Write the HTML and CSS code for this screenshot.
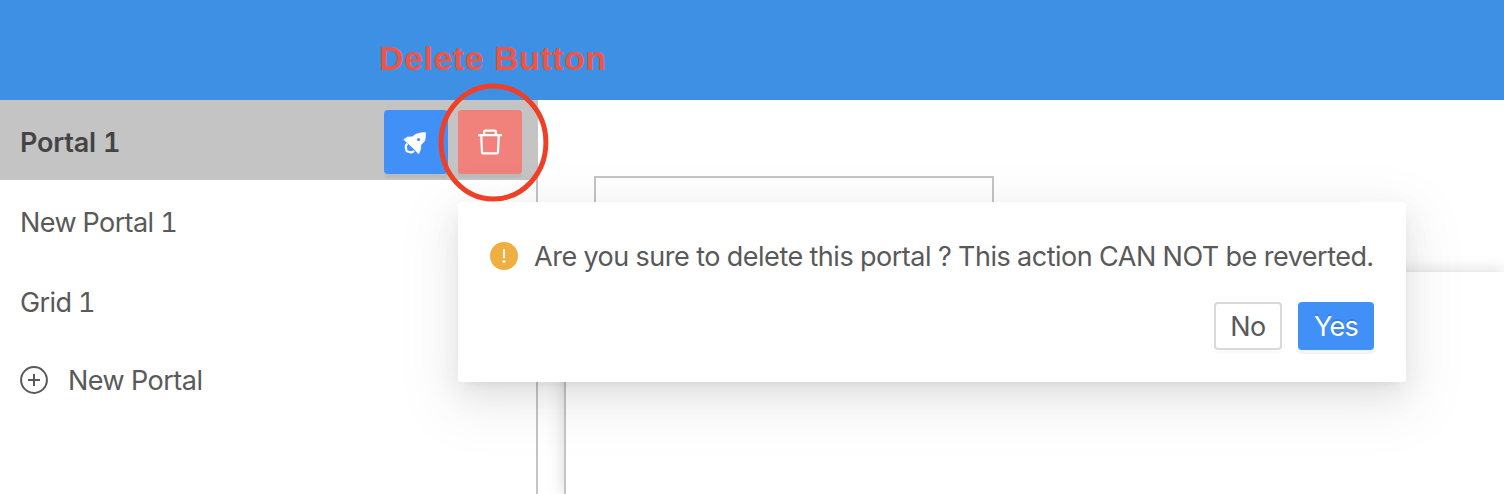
FILE: index.html
```html
<!DOCTYPE html>
<html lang="en">
<head>
<meta charset="utf-8">
<title>Portals</title>
<link rel="stylesheet" href="styles.css">
</head>
<body>
<div class="app">
  <header class="topbar"></header>
  <div class="body">
    <aside class="sidebar">
      <div class="item selected">
        <span class="label t-portal">Portal 1</span>
        <div class="actions">
          <button class="btn launch" aria-label="Launch">
            <svg width="32" height="32" viewBox="0 0 32 32">
              <path d="M25.600 6.600 Q25.800 12.500 24.500 15.200 L20.900 19 L20.600 23.500 L18.600 28 L13.800 22.800 L8.600 18 L3.700 13.500 L7.500 11 L12.600 10.800 Q16.200 6.500 25.600 6.600 Z" fill="#fff" stroke="#fff" stroke-width=".5" stroke-linejoin="round"/>
              <circle cx="18.500" cy="13.500" r="1.600" fill="#4190f7"/>
              <path d="M7.400 17.500 Q4.800 20 6.200 22.600 Q5.800 25.800 8.900 25.700 Q12 27.400 14 24.800" fill="none" stroke="#fff" stroke-width="2.100"/>
            </svg>
          </button>
          <button class="btn delete" aria-label="Delete">
            <svg width="32" height="32" viewBox="0 0 1024 1024" fill="#fff"><path d="M360 184h-8c4.400 0 8-3.600 8-8v8h304v-8c0 4.400 3.600 8 8 8h-8v72h72v-80c0-35.300-28.700-64-64-64H352c-35.300 0-64 28.700-64 64v80h72v-72zm504 72H160c-17.700 0-32 14.300-32 32v32c0 4.400 3.600 8 8 8h60.400l24.700 523c1.600 34.100 29.800 61 63.900 61h454c34.200 0 62.300-26.800 63.900-61l24.700-523H888c4.400 0 8-3.600 8-8v-32c0-17.700-14.300-32-32-32zM731.300 840H292.700l-24.200-512h487l-24.200 512z"/></svg>
          </button>
        </div>
      </div>
      <div class="item"><span class="label t-new1">New Portal 1</span></div>
      <div class="item"><span class="label t-grid">Grid 1</span></div>
      <div class="item add">
        <svg width="28" height="28" viewBox="0 0 28 28" fill="none" stroke="#595959" stroke-width="2"><circle cx="14" cy="14" r="12.900"/><path d="M14 8v12M8 14h12"/></svg>
        <span class="label t-new">New Portal</span>
      </div>
    </aside>
    <main class="content">
      <div class="tab"></div>
      <div class="panel"></div>
    </main>
  </div>

  <div class="popconfirm">
    <div class="message">
      <svg width="28" height="28" viewBox="0 0 28 28"><circle cx="14" cy="14" r="14" fill="#efb041"/><path d="M13.100 7h1.800v9.200h-1.800z" fill="#fff"/><circle cx="14" cy="19.500" r="1.500" fill="#fff"/></svg>
      <span class="label t-ask">Are you sure to delete this portal ? This action CAN NOT be reverted.</span>
    </div>
    <div class="buttons">
      <button class="small no">No</button>
      <button class="small yes">Yes</button>
    </div>
  </div>
  <svg class="arrow" width="18" height="12" viewBox="0 0 18 12"><path d="M9 0L18 12H0z" fill="#fff"/></svg>
  <svg class="ring" width="112" height="120" viewBox="0 0 112 120"><ellipse cx="56.500" cy="60.500" rx="52.400" ry="56.500" fill="none" stroke="#ed4027" stroke-width="5"/></svg>
  <div class="callout">Delete Button</div>
</div>
</body>
</html>
```
FILE: styles.css
```css
* { box-sizing: border-box; }
body { margin: 0; background: #fff; font-family: Inter, "Liberation Sans", sans-serif; font-size: 27px; color: #595959; }
button { font: inherit; padding: 0; border: 0; }
svg { display: block; flex: none; }
.app { position: relative; width: 1504px; height: 494px; overflow: hidden; display: flex; flex-direction: column; }
.topbar { height: 100px; background: #3e90e4; flex: none; }
.body { flex: 1; display: flex; }
.sidebar { width: 538px; border-right: 2px solid #c4c4c4; flex: none; }
.item { height: 80px; padding: 4px 14px 0 20px; display: flex; align-items: center; }
.selected { background: #c4c4c4; font-weight: 600; color: #444; }
.label { white-space: nowrap; line-height: 38px; padding-top: 2px; font-variant-numeric: tabular-nums; }
.actions { margin-left: auto; display: flex; gap: 10px; }
.btn { width: 64px; height: 64px; border-radius: 4px; display: flex; align-items: center; justify-content: center; box-shadow: 0 4px 0 rgba(0,0,0,.045); }
.launch { background: #4190f7; }
.delete { background: #f0827b; }
.add { height: 76px; gap: 20px; }
.content { flex: 1; padding: 76px 0 0 26px; display: flex; flex-direction: column; }
.tab { width: 400px; height: 96px; margin-left: 30px; border: 2px solid #c4c4c4; border-bottom: 0; flex: none; }
.panel { flex: 1; background: #fff; border-left: 2px solid #c4c4c4; box-shadow: 0 0 16px rgba(0,0,0,.17); }
.popconfirm { position: absolute; left: 458px; top: 202px; width: 948px; height: 180px; padding: 34px 32px 0; background: #fff; border-radius: 4px; box-shadow: 0 6px 12px -8px rgba(0,0,0,.12), 0 12px 32px rgba(0,0,0,.08), 0 18px 56px 16px rgba(0,0,0,.05); }
.message { display: flex; align-items: center; gap: 16px; height: 40px; }
.buttons { display: flex; justify-content: flex-end; gap: 16px; margin-top: 26px; }
.small { height: 48px; border-radius: 4px; line-height: 46px; padding-top: 2px; }
.no { width: 68px; background: #fff; border: 2px solid #d9d9d9; color: #595959; line-height: 42px; letter-spacing: -.5px; box-shadow: 0 4px 0 rgba(0,0,0,.015); }
.yes { width: 76px; background: #4190f7; color: #fff; letter-spacing: -.8px; text-shadow: 0 -2px 0 rgba(0,0,0,.12); box-shadow: 0 4px 0 rgba(0,0,0,.045); }
.arrow { position: absolute; left: 489px; top: 190px; }
.ring { position: absolute; left: 437px; top: 82px; }
.callout { position: absolute; left: 379px; top: 38px; font: bold 34px/40px "Liberation Sans", sans-serif; color: #ed5546; white-space: nowrap; letter-spacing: .5px; }
.t-portal { letter-spacing: -.2px; }
.t-new1, .t-grid { letter-spacing: -.6px; }
.t-new { letter-spacing: -.5px; }
.t-ask { letter-spacing: -.475px; }
```
